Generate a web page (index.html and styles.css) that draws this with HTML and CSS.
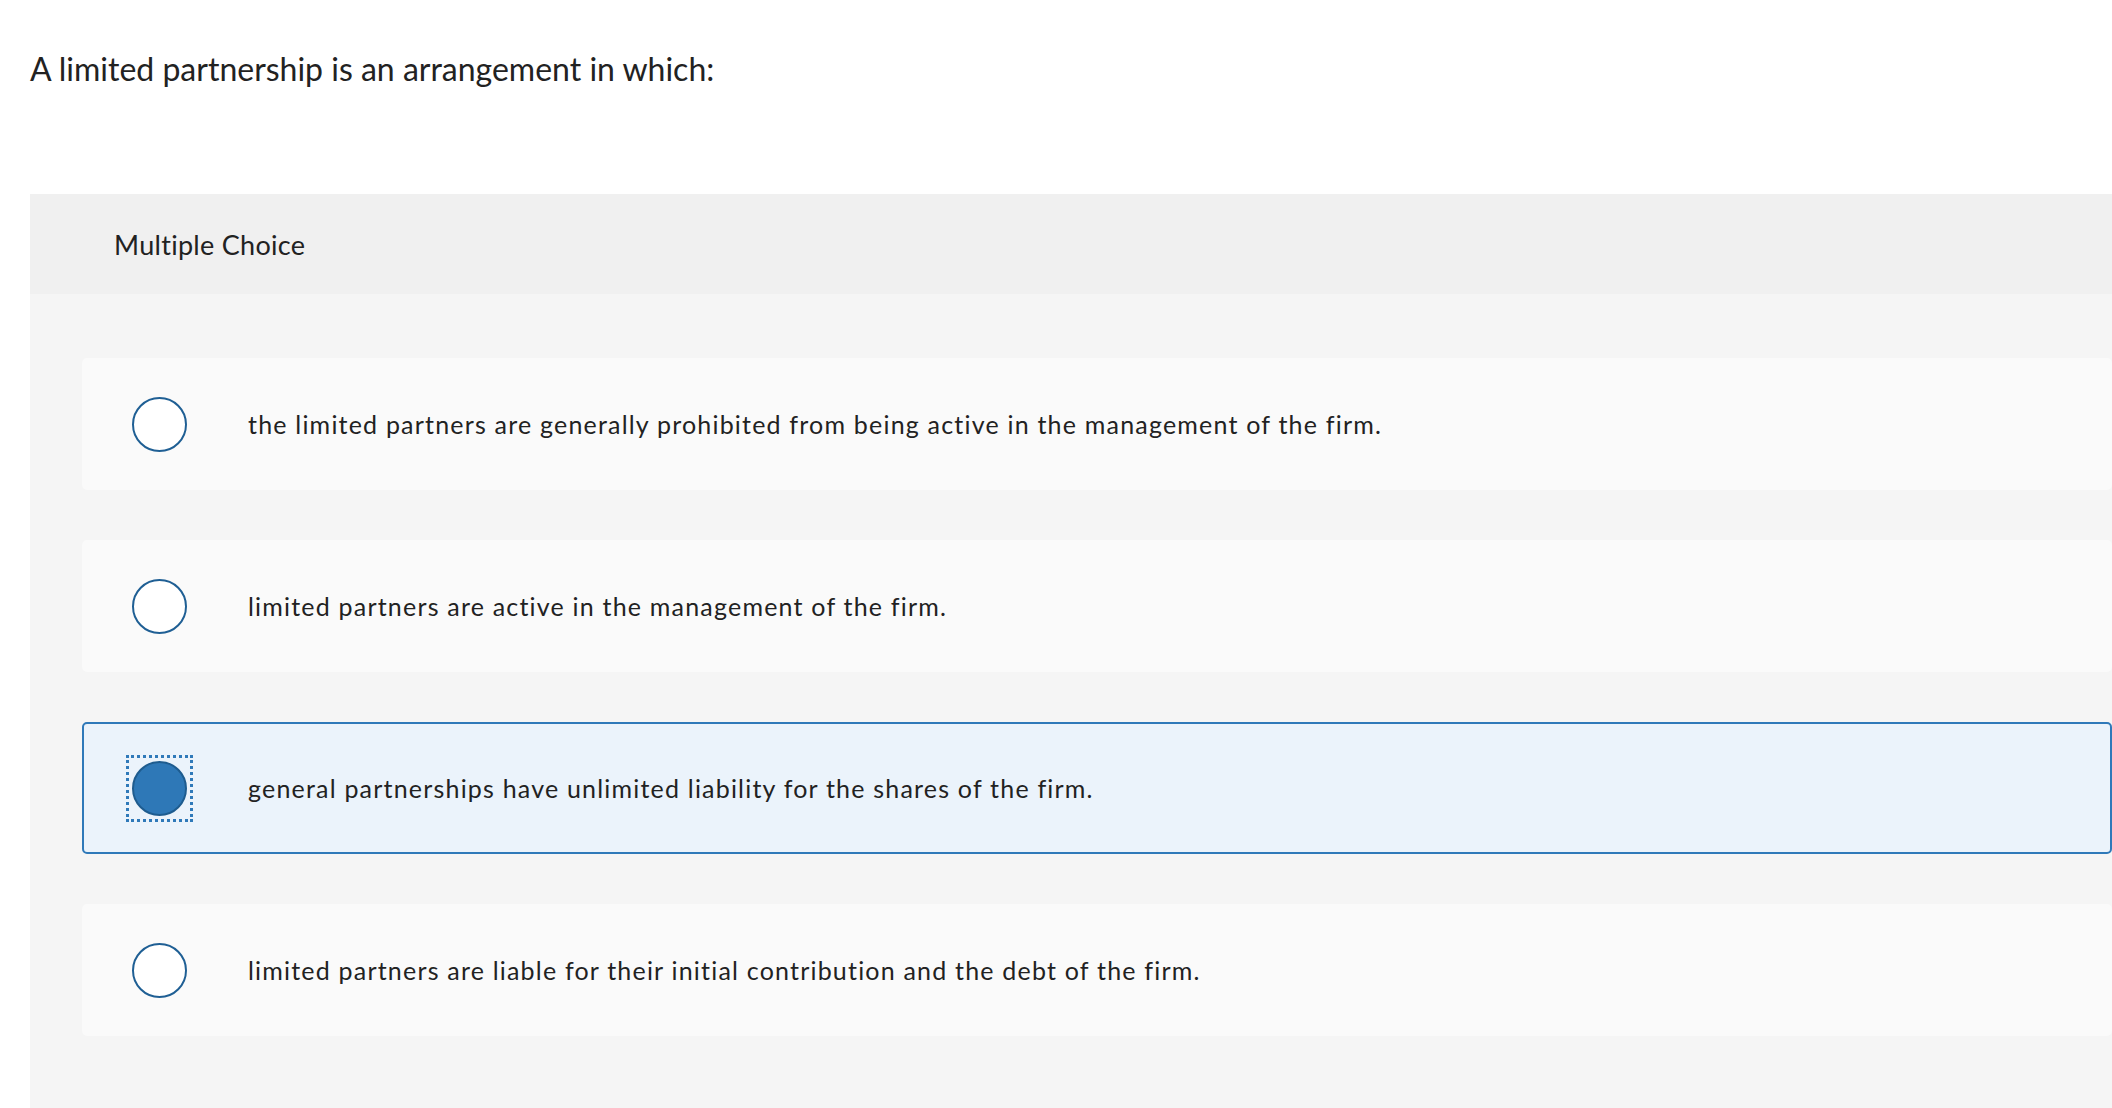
FILE: index.html
```html
<!DOCTYPE html>
<html lang="en">
<head>
<meta charset="utf-8">
<title>Multiple Choice</title>
<link rel="stylesheet" href="styles.css">
</head>
<body>
<main class="page">
  <p class="question">A limited partnership is an arrangement in which:</p>
  <section class="panel">
    <header class="panel-head">Multiple Choice</header>
    <div class="choices">
      <label class="choice">
        <span class="radio"></span>
        <span class="choice-text">the limited partners are generally prohibited from being active in the management of the firm.</span>
      </label>
      <label class="choice">
        <span class="radio"></span>
        <span class="choice-text">limited partners are active in the management of the firm.</span>
      </label>
      <label class="choice choice--selected">
        <span class="radio radio--checked"></span>
        <span class="choice-text">general partnerships have unlimited liability for the shares of the firm.</span>
      </label>
      <label class="choice">
        <span class="radio"></span>
        <span class="choice-text">limited partners are liable for their initial contribution and the debt of the firm.</span>
      </label>
    </div>
  </section>
</main>
</body>
</html>
```
FILE: styles.css
```css
html, body {
  margin: 0;
  padding: 0;
  background: #ffffff;
  overflow: hidden;
}

body {
  font-family: Lato, "Open Sans", "Liberation Sans", sans-serif;
  color: #222222;
  width: 2112px;
  height: 1108px;
}

.page {
  padding-left: 30px;
}

.question {
  margin: 0;
  padding-top: 47px;
  height: 194px;
  box-sizing: border-box;
  font-size: 32px;
  line-height: 44px;
}

.panel {
  width: 2134px;
  min-height: 914px;
  background: #f5f5f5;
}

.panel-head {
  height: 100px;
  background: #f0f0f0;
  padding-left: 84px;
  display: flex;
  align-items: center;
  font-size: 27px;
  letter-spacing: 0.3px;
}

.choices {
  padding: 64px 52px 0;
  display: flex;
  flex-direction: column;
  gap: 50px;
}

.choice {
  height: 132px;
  box-sizing: border-box;
  border: 2px solid transparent;
  border-radius: 5px;
  background: #fafafa;
  display: flex;
  align-items: center;
  padding-left: 48px;
}

.choice--selected {
  background: #ebf3fb;
  border-color: #2f79b9;
}

.radio {
  position: relative;
  width: 55px;
  height: 55px;
  box-sizing: border-box;
  border-radius: 50%;
  border: 2px solid #1f5f94;
  background: #ffffff;
  flex: none;
}

.radio--checked {
  background: #2e78b7;
  border: 2px solid #1e5c8f;
}

.radio--checked::after {
  content: "";
  position: absolute;
  left: -8px;
  top: -8px;
  width: 67px;
  height: 67px;
  box-sizing: border-box;
  border: 3px dotted #2f79b9;
}

.choice-text {
  margin-left: 61px;
  font-size: 25px;
  line-height: 32px;
  letter-spacing: 1.2px;
}
```
